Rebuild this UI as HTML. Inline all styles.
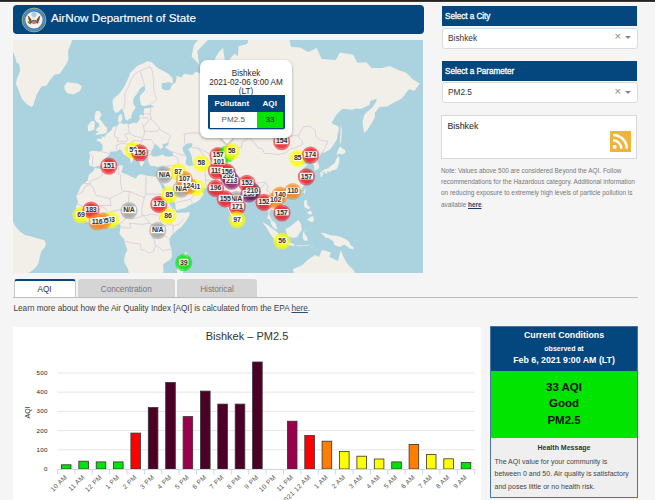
<!DOCTYPE html>
<html><head><meta charset="utf-8">
<style>
*{box-sizing:border-box;margin:0;padding:0}
html,body{width:655px;height:500px;overflow:hidden;background:#f5f5f5;font-family:"Liberation Sans",sans-serif;position:relative}
.abs{position:absolute}
#topbar{left:0;top:0;width:655px;height:1px;background:#232323}#topbar1{left:0;top:1px;width:655px;height:1px;background:#3c3c3c}
#topbar2{left:0;top:2px;width:655px;height:1px;background:#fafafa}
#hdr{left:13px;top:5px;width:411px;height:29px;background:#04477f;border-radius:4px}
#seal{left:20px;top:6px;width:28px;height:28px}
#title{left:51px;top:10px;font-size:11.65px;color:#fff;line-height:16px;white-space:nowrap;-webkit-text-stroke:0.15px #fff}
#map{left:13px;top:40px;width:410px;height:233px;background:#aad3df;overflow:hidden}
#map svg{position:absolute;left:0;top:0}
.ml{font:bold 7px "Liberation Sans",sans-serif;fill:#333;text-anchor:middle;letter-spacing:-0.2px}
#popup{left:199.5px;top:60px;width:92px;height:77.5px;background:#fff;border-radius:7px;box-shadow:0 1px 3px rgba(0,0,0,.35)}
#tip{left:221.5px;top:131.5px;width:10px;height:10px;background:#fff;transform:rotate(45deg);box-shadow:1px 1px 2px rgba(0,0,0,.25)}
#pt{left:199.5px;top:69.3px;width:93px;text-align:center;font-size:8.15px;line-height:9px;color:#2a2a2a}
#ptab{left:208px;top:95.3px;width:76.5px;height:34px;background:#04477f;border-radius:0 0 2px 2px;box-shadow:0 0.5px 0 #6a93bd}
#ptab .h{position:absolute;left:0;top:0;width:76px;height:16px;color:#fff;font-weight:bold;font-size:8.1px}
#ptab .c1{position:absolute;left:1.5px;top:17px;width:47.5px;height:15.5px;background:#fff;font-size:8.1px;color:#555;text-align:center;line-height:16px}
#ptab .c2{position:absolute;left:49px;top:17px;width:26px;height:15.5px;background:#00e400;font-size:8.1px;color:#222;text-align:center;line-height:16px}
.sel-h{left:442px;width:195px;height:20px;background:#04477f;color:#fff;font-size:8.2px;padding-left:3px;line-height:21px;-webkit-text-stroke:0.3px #fff;letter-spacing:-0.05px}
.sel-i{left:442px;width:195.5px;height:21px;background:#fff;border:1px solid #dcdcdc;border-radius:3px;font-size:8.3px;color:#333;padding-left:5px;line-height:18px}
.sel-i .x{position:absolute;left:171.5px;top:-1.3px;font-size:11px;color:#888}
.sel-i .ar{position:absolute;left:182px;top:7.8px;width:0;height:0;border-left:3px solid transparent;border-right:3px solid transparent;border-top:3px solid #888}
#cityb{left:441px;top:115px;width:196px;height:43.5px;background:#fff;border:1.5px solid #d8d8d8}
#cityb .n{position:absolute;left:5.5px;top:5px;font-size:8.8px;color:#333;-webkit-text-stroke:0.1px #333}
#rss{left:610px;top:131px;width:20.5px;height:20.5px;background:#f2b33d}
#note{left:441px;top:164.8px;width:196px;font-size:6.4px;line-height:11.3px;color:#777;white-space:nowrap}
#note b{color:#1a3a6e;text-decoration:underline}
.tab{top:279px;height:18px;font-size:8.2px;text-align:center;line-height:20px;border-radius:3px 3px 0 0}
#tab1{left:13.5px;width:62px;background:#fff;color:#333;border:1px solid #c8c8c8;border-top:2px solid #04477f;border-bottom:none;line-height:17px}
#tab2{left:78px;width:96.5px;background:#d5d5d5;color:#777;line-height:22px}
#tab3{left:177px;width:80px;background:#d5d5d5;color:#777;line-height:22px}
#tabline{left:13px;top:296.5px;width:624.5px;height:1px;background:#bcbcbc}
#learn{left:13.5px;top:303.3px;font-size:8.2px;color:#404040;white-space:nowrap;line-height:11px}
#learn u{color:#2a4a78}
#chart{left:13px;top:327px;width:468px;height:173px;background:#fff}
#chart svg{position:absolute;left:0;top:0}
.yl{font:6.2px "Liberation Sans",sans-serif;fill:#222;text-anchor:end;letter-spacing:0.3px}
.xl{font:6.6px "Liberation Sans",sans-serif;fill:#555;text-anchor:end;letter-spacing:0.35px}
.at{font:7px "Liberation Sans",sans-serif;fill:#333;text-anchor:middle}
.ct{font:11px "Liberation Sans",sans-serif;fill:#333;text-anchor:middle}
#cc{left:490px;top:326px;width:148px;height:172px;border:1px solid #4a74a2;background:#efefef}
#cc .hd{position:absolute;left:0;top:0;width:146px;height:43.5px;background:#04477f;color:#fff;text-align:center;font-weight:bold}
#cc .g{position:absolute;left:0;top:43.5px;width:146px;height:67.5px;background:#00e400;color:#111;text-align:center;font-size:11.5px;font-weight:bold;line-height:16.5px;padding-top:8px}
#cc .hm{position:absolute;left:0;top:111px;width:146px;text-align:center;font-weight:bold;font-size:7px;color:#333;padding-top:6px}
#cc .tx{position:absolute;left:3.5px;top:129.4px;width:143px;font-size:7px;line-height:12.1px;color:#444;white-space:nowrap}
</style></head><body>
<div class="abs" id="topbar"></div><div class="abs" id="topbar1"></div>
<div class="abs" id="topbar2"></div>
<div class="abs" id="hdr"></div>
<svg class="abs" id="seal" viewBox="0 0 28 28">
 <circle cx="14" cy="14" r="11.9" fill="#3f7cb8" stroke="#a9b56e" stroke-width="0.9"/>
 <circle cx="14" cy="14" r="10.2" fill="none" stroke="#6f9fce" stroke-width="0.6"/>
 <circle cx="14" cy="14" r="8.6" fill="#f4f2ea"/>
 <circle cx="14" cy="8.6" r="2.6" fill="#a9cfe0"/>
 <path d="M7.6 9.2 Q9.5 10.5 11.3 13.5 L12.2 16.5 L10.5 18 Q8.5 15 7.6 9.2Z" fill="#7b5227"/>
 <path d="M20.4 9.2 Q18.5 10.5 16.7 13.5 L15.8 16.5 L17.5 18 Q19.5 15 20.4 9.2Z" fill="#7b5227"/>
 <circle cx="14" cy="12.6" r="1.3" fill="#e9e4d6"/>
 <path d="M12 14.6 h4 v2.6 q-2 2.2 -4 0Z" fill="#d96f78"/>
 <rect x="12" y="14" width="4" height="1.2" fill="#4a6fb0"/>
 <path d="M7.8 15.5 q1.5 1.5 3 2.6" stroke="#4f8a3a" stroke-width="1.2" fill="none"/>
 <path d="M17 18 q1.8 -0.8 3 -2.5" stroke="#b9b09a" stroke-width="0.8" fill="none"/>
</svg>
<div class="abs" id="title">AirNow Department of State</div>

<div class="abs" id="map">
<svg width="410" height="233" viewBox="0 0 410 233"><defs><filter id="bl" x="-20%" y="-40%" width="140%" height="180%"><feGaussianBlur stdDeviation="0.45"/></filter></defs>
<path d="M82.5 127.2L76.6 125.4L75.7 121.8L77.1 116.8L76.1 112.6L78.6 110.8L86.5 111.5L88.8 111.5L89.5 108.7L89.5 104.9L87.4 102.3L84.4 101.0L83.5 99.3L86.5 98.5L89.0 99.0L88.3 96.3L91.3 97.0L92.3 95.7L94.2 93.1L95.6 92.6L97.3 91.6L99.1 89.1L100.1 86.7L103.1 86.1L105.4 85.0L105.8 83.3L104.9 80.4L105.8 75.6L109.1 73.8L108.6 77.1L109.6 77.7L108.1 81.8L108.4 83.6L111.2 84.1L113.7 83.6L115.4 84.7L118.9 83.3L121.8 82.4L123.0 83.6L124.8 82.1L126.5 79.8L126.3 76.5L127.3 74.4L129.6 75.0L131.3 75.9L130.5 71.9L131.3 68.4L135.4 68.0L137.9 67.7L141.2 66.4L137.3 64.7L132.1 66.1L128.6 65.7L127.1 61.3L126.8 56.0L132.1 50.3L131.6 45.2L127.1 48.4L123.8 54.1L120.8 57.8L120.2 61.3L120.5 64.4L122.8 67.1L121.3 69.7L119.2 72.8L118.0 78.3L115.9 78.9L114.5 80.7L112.4 79.2L111.7 75.9L111.1 73.8L109.9 70.0L108.9 68.7L107.4 70.0L104.8 72.5L102.6 72.8L100.8 70.3L100.1 66.7L99.6 64.4L99.6 60.3L101.4 57.8L105.6 54.5L108.9 50.3L111.4 46.4L114.0 40.7L116.0 36.8L117.2 32.7L121.3 29.0L124.3 25.7L129.6 23.7L134.3 21.2L138.8 22.2L142.6 26.1L145.4 28.6L149.5 30.4L155.3 33.7L159.5 38.1L160.0 43.6L156.2 42.3L148.7 43.2L148.9 48.4L152.0 50.3L157.0 49.9L158.6 45.2L162.8 42.3L163.6 35.9L168.6 37.2L171.1 33.7L179.4 35.0L182.7 31.8L188.5 33.7L191.8 28.6L203.4 32.7L202.6 28.6L201.8 19.1L205.9 12.1L210.0 8.0L211.7 19.1L210.5 41.1L215.0 35.9L216.7 19.1L221.7 13.7L225.0 16.4L225.5 6.3L234.1 3.9L237.4 -7.7L257.3 -22.5L273.9 -11.2L278.0 6.9L287.1 7.5L295.4 12.1L303.7 8.0L308.7 19.1L322.8 20.1L326.9 12.6L340.2 14.8L344.3 22.7L353.5 22.2L358.4 28.1L369.2 28.1L376.7 26.1L386.6 30.4L393.3 32.7L399.9 39.4L406.9 43.6L404.0 47.2L401.5 50.7L395.7 49.2L390.8 56.0L388.3 58.8L380.0 63.0L374.2 66.4L366.7 67.1L361.8 72.8L362.1 76.5L359.6 81.8L356.8 86.1L354.5 89.7L351.1 92.9L350.5 88.9L349.5 81.8L351.5 74.4L354.8 71.3L359.3 67.4L362.9 62.0L363.9 58.5L357.3 60.9L356.4 65.1L347.7 69.0L343.5 68.4L338.5 69.7L329.4 68.7L323.6 74.4L318.3 83.3L322.8 85.3L325.6 86.4L325.8 90.2L324.4 95.5L324.0 99.3L320.8 104.2L317.3 108.9L312.0 112.4L308.7 113.1L306.7 115.7L303.7 119.0L304.6 122.2L306.0 125.4L306.2 128.3L304.6 129.5L300.9 130.5L301.2 127.9L301.2 125.4L299.6 123.7L298.4 122.0L297.4 119.5L293.8 120.1L293.4 117.3L292.1 117.9L289.6 120.5L287.1 122.0L288.8 124.5L291.3 123.9L294.8 124.5L291.3 127.4L289.3 129.5L291.0 131.1L293.4 135.4L293.6 137.8L291.8 138.9L293.8 140.1L291.8 144.0L289.6 147.8L288.0 149.6L284.8 151.9L281.3 153.2L277.2 154.1L274.7 155.0L274.2 157.1L271.4 155.0L268.9 155.9L268.1 157.6L266.9 159.9L269.2 162.9L271.1 164.6L272.2 167.2L272.7 170.9L270.9 173.5L268.6 174.3L265.3 177.2L264.6 174.3L262.3 172.1L260.3 170.3L258.1 168.9L257.1 170.9L256.0 174.3L257.6 177.4L258.8 180.2L260.9 181.2L262.9 184.0L263.8 187.4L264.3 189.2L263.1 189.3L260.3 187.5L259.0 185.7L257.8 182.5L257.5 180.0L254.5 178.2L254.8 175.2L255.1 172.3L254.3 168.9L253.5 165.8L253.3 163.6L251.2 163.9L248.8 164.8L248.0 162.0L246.7 158.5L245.5 156.8L244.0 154.1L243.0 152.7L241.5 153.6L239.1 154.4L236.6 155.0L235.6 156.8L232.9 158.5L229.6 161.8L227.8 163.8L225.5 165.0L224.5 167.2L224.6 169.8L223.8 172.6L223.8 174.5L222.3 176.0L220.0 178.0L218.3 176.7L217.3 174.0L215.7 170.6L213.7 165.5L212.4 160.3L212.2 156.8L211.9 154.6L211.5 153.7L210.0 155.9L208.4 156.2L206.2 154.4L206.2 153.2L205.7 152.7L204.6 151.4L203.1 149.9L201.9 148.1L197.6 148.1L193.5 148.3L189.0 147.8L186.3 145.7L184.8 144.8L182.2 145.7L179.5 144.2L176.9 143.5L175.2 140.8L173.1 139.3L171.6 138.5L170.8 140.5L171.9 142.2L173.2 144.0L174.6 146.3L175.6 148.7L176.2 146.6L177.1 149.2L178.5 150.5L181.0 150.1L182.7 148.7L184.3 147.4L185.0 146.3L185.3 149.6L187.5 151.2L190.6 153.2L190.2 155.3L188.5 156.8L187.2 159.6L184.2 161.5L181.7 163.1L178.5 163.9L174.7 166.2L172.1 167.9L166.9 169.2L164.9 170.3L163.3 170.1L162.6 168.1L162.3 165.5L162.3 163.2L159.5 159.4L156.5 155.9L155.5 152.3L153.2 148.7L150.9 145.0L149.0 142.9L149.5 140.3L148.5 143.1L148.2 143.5L146.0 140.5L145.6 139.5L146.2 142.2L147.7 145.3L149.7 149.6L152.5 154.1L153.3 157.6L155.3 161.2L156.7 164.6L158.8 166.7L162.1 169.8L163.1 172.3L163.6 172.8L165.3 173.1L168.6 172.5L172.7 172.8L175.7 172.1L176.4 171.8L176.6 174.2L175.7 176.5L173.7 179.9L171.4 183.2L167.8 187.4L164.5 189.8L161.0 193.2L158.2 195.6L156.5 199.3L156.7 202.8L157.2 205.6L158.3 208.2L158.8 212.4L159.0 216.7L157.0 219.8L153.7 221.8L150.0 224.5L150.4 228.0L150.4 232.5L146.2 235.2L145.4 239.9L139.6 247.6L134.6 252.5L123.0 252.5L121.7 247.6L118.9 241.8L116.0 234.3L115.0 228.9L111.1 221.8L111.4 217.5L112.7 213.2L114.4 209.9L113.1 206.5L111.9 203.1L111.7 201.5L111.1 199.1L108.4 196.5L106.4 193.2L106.9 190.7L107.7 187.4L107.4 185.4L105.8 184.4L103.1 184.2L101.4 184.4L99.0 181.9L97.0 180.9L94.0 181.2L91.5 182.2L88.2 183.5L84.9 182.9L79.1 184.2L76.6 183.2L73.3 180.9L69.9 178.9L69.6 177.4L68.8 175.5L66.6 173.5L65.3 171.8L63.6 170.1L63.3 168.1L62.5 166.9L64.1 164.8L64.8 162.0L64.3 158.5L63.1 156.2L64.6 153.2L66.1 150.5L67.5 146.8L69.6 143.9L72.8 142.0L74.9 140.3L75.3 137.0L76.1 134.5L79.1 132.3L80.7 130.5L81.7 127.9Z" fill="#f2efe9"/>
<path d="M-8.0 -106.0L-8.0 -22.5L-3.0 -11.2L-2.2 -4.4L-1.0 3.3L-0.5 10.9L2.0 16.4L3.6 22.7L6.1 24.2L7.3 30.0L6.1 33.7L3.6 39.4L3.1 44.4L5.3 49.2L6.9 54.1L9.4 59.5L13.6 64.0L18.7 67.1L20.5 64.7L21.9 59.5L24.0 54.1L28.5 46.4L33.5 45.6L36.8 40.2L41.8 34.6L46.7 33.7L51.7 26.6L54.2 22.7L55.4 19.1L55.0 10.9L58.7 2.0L60.0 -7.7L66.6 -106.0Z" fill="#f2efe9"/>
<path d="M54.2 42.3L65.0 43.6L69.0 46.4L67.0 51.1L60.3 54.5L53.9 53.0L51.7 49.2L51.2 46.0Z" fill="#f2efe9"/>
<path d="M82.0 95.2L92.0 93.4L93.8 91.8L94.3 87.8L91.7 85.8L89.0 81.8L86.5 78.9L88.5 74.4L86.5 70.9L83.2 70.9L81.9 74.4L81.6 78.9L83.2 81.8L85.7 83.3L86.5 86.7L83.7 88.0L83.0 91.0L86.2 91.6L84.5 92.4Z" fill="#f2efe9"/>
<path d="M75.3 91.6L74.6 86.1L78.2 81.3L81.6 81.3L81.6 86.1L81.1 89.7Z" fill="#f2efe9"/>
<path d="M308.7 132.5L315.3 130.9L316.7 132.5L318.6 130.5L323.3 129.5L324.6 127.4L326.1 122.7L326.6 117.9L325.3 116.2L323.3 119.0L321.5 123.3L318.3 125.4L315.3 128.3L311.2 129.5L308.5 131.5Z" fill="#f2efe9"/>
<path d="M307.9 137.4L307.0 131.9L310.0 132.5L309.4 136.4Z" fill="#f2efe9"/>
<path d="M311.2 133.5L312.8 131.1L314.7 131.1L314.2 132.9Z" fill="#f2efe9"/>
<path d="M323.6 115.7L324.3 111.7L326.8 106.6L331.9 110.1L332.7 112.4L329.1 114.6L325.3 113.5L324.4 115.1Z" fill="#f2efe9"/>
<path d="M326.9 105.4L327.3 95.5L327.8 83.9L328.9 90.2L328.3 100.5Z" fill="#f2efe9"/>
<path d="M292.9 148.1L291.6 154.1L290.6 152.3L291.6 149.4Z" fill="#f2efe9"/>
<path d="M274.7 157.6L273.1 160.8L271.6 158.3L273.4 157.5Z" fill="#f2efe9"/>
<path d="M291.5 160.3L294.1 160.5L293.8 164.6L297.4 168.1L295.4 168.9L291.5 167.2L291.0 163.8Z" fill="#f2efe9"/>
<path d="M299.6 175.7L301.2 179.9L299.2 182.2L293.8 179.9L296.3 177.9Z" fill="#f2efe9"/>
<path d="M297.1 170.6L299.6 173.1L297.1 174.8L293.8 173.1Z" fill="#f2efe9"/>
<path d="M285.5 179.9L288.0 184.0L288.8 189.8L283.8 197.3L280.5 198.1L275.5 196.5L273.9 194.0L272.2 189.0L275.5 187.4L280.5 184.0L283.8 181.0Z" fill="#f2efe9"/>
<path d="M249.5 182.2L254.8 184.9L258.6 188.2L263.6 191.5L267.2 196.5L266.9 201.3L261.4 199.8L257.3 194.0L254.0 188.2Z" fill="#f2efe9"/>
<path d="M267.2 201.5L278.2 203.0L281.3 204.5L281.3 206.1L273.9 204.8L267.9 204.0L265.9 202.8Z" fill="#f2efe9"/>
<path d="M282.2 205.3L288.8 205.5L297.9 205.1L293.8 206.1L285.5 206.3Z" fill="#f2efe9"/>
<path d="M302.1 205.3L296.3 208.7L297.9 207.3Z" fill="#f2efe9"/>
<path d="M298.8 189.3L291.3 190.7L291.3 193.2L293.8 196.5L294.9 200.8L291.1 200.6L289.6 197.3L290.1 192.3L291.8 190.2L297.1 189.8Z" fill="#f2efe9"/>
<path d="M309.0 192.8L311.2 193.0L313.7 194.0L317.8 195.3L323.6 195.8L328.6 197.3L334.4 200.3L336.6 202.3L337.2 204.8L340.5 207.3L340.7 209.2L336.6 208.5L334.4 206.8L331.1 204.5L329.1 205.5L327.8 206.8L325.3 206.5L322.0 205.5L321.1 204.0L320.3 201.5L317.8 199.5L315.3 198.1L312.3 197.8L311.2 196.1L310.0 194.8L307.9 193.8Z" fill="#f2efe9"/>
<path d="M309.5 209.9L318.0 212.4L316.2 216.7L324.9 221.0L327.8 209.9L329.9 215.8L334.1 223.6L341.2 230.7L345.2 243.7L340.2 255.6L285.5 253.5L279.8 228.9L288.8 225.4L295.4 219.2L302.1 214.9L306.2 217.0L307.9 212.1Z" fill="#f2efe9"/>
<path d="M224.5 175.2L227.1 179.9L225.1 181.5L223.8 178.2Z" fill="#f2efe9"/>
<path d="M173.2 211.5L174.9 217.5L172.4 225.4L169.4 234.3L166.1 235.2L164.0 231.6L164.5 227.1L165.3 218.9L169.4 217.5L171.4 213.8Z" fill="#f2efe9"/>
<path d="M186.0 24.2L178.5 16.4L181.0 5.1L191.0 -7.7L204.2 -14.9L196.0 -1.1L184.3 10.9Z" fill="#f2efe9"/>
<path d="M423.1 16.4L418.1 26.6L412.3 33.7L416.5 44.4L409.8 46.4L413.2 50.3L416.5 56.0L414.8 66.4L426.4 71.3L418.1 81.8L436.4 69.7L444.7 63.0L456.3 66.4L456.3 16.4Z" fill="#f2efe9"/>
<path d="M145.1 128.3L147.9 129.3L146.2 130.3Z" fill="#f2efe9"/>
<path d="M130.5 128.3L135.1 128.9L132.1 129.5Z" fill="#f2efe9"/>
<path d="M112.1 122.7L117.4 122.9L116.5 126.0L112.2 124.1Z" fill="#f2efe9"/>
<path d="M106.8 116.4L107.4 121.0L105.4 121.4L105.1 117.3Z" fill="#f2efe9"/>
<path d="M107.1 112.4L106.8 116.0L105.8 114.6Z" fill="#f2efe9"/>
<path d="M0.0 182.5L3.0 187.0L7.5 192.0L12.0 195.0L16.5 196.0L23.0 198.0L29.0 199.5L31.5 200.5L33.0 203.5L32.0 207.0L28.5 211.0L27.0 216.0L25.5 223.0L23.0 227.0L19.5 230.5L15.0 233.0L0.0 233.0Z" fill="#f2efe9"/>
<path d="M82.5 127.2L84.2 126.0L87.9 126.0L90.3 124.1L91.8 121.8L91.0 120.1L93.0 117.5L95.1 116.0L96.8 113.7L97.3 111.7L100.1 111.5L103.9 111.2L106.3 109.2L108.4 110.1L110.1 113.7L113.9 116.4L115.5 117.7L117.4 119.0L117.4 123.3L119.7 121.2L120.5 117.9L122.2 118.6L118.0 115.1L113.9 111.2L112.1 108.2L114.0 106.1L115.5 108.2L118.9 111.2L123.3 114.6L123.8 119.0L126.3 122.2L127.3 125.4L129.0 126.4L130.3 123.7L131.3 122.7L129.5 120.1L129.3 117.9L132.1 117.3L135.4 117.1L134.9 118.4L135.4 122.2L137.1 125.6L142.1 126.2L144.6 127.0L148.7 125.8L151.5 126.2L151.0 129.5L149.7 133.5L148.4 136.6L144.6 136.8L139.6 136.4L132.9 135.4L128.0 133.9L124.7 135.4L123.0 138.4L118.0 136.4L113.1 133.9L110.6 133.5L108.1 131.5L109.7 128.5L109.7 125.2L108.1 125.4L99.8 125.8L93.2 127.4L88.2 129.1L81.7 127.9Z" fill="#aad3df"/>
<path d="M139.7 116.4L143.7 116.6L149.5 114.6L152.8 116.2L156.2 116.8L160.5 115.7L159.5 112.4L154.5 108.9L152.2 107.3L150.4 107.1L149.5 107.8L147.2 109.2L146.2 107.3L143.7 104.9L142.4 104.0L140.7 107.3L138.9 110.1L137.8 112.4L137.8 114.6Z" fill="#aad3df"/>
<path d="M152.2 107.1L155.0 104.9L156.2 102.8L149.5 104.2L150.0 107.1Z" fill="#aad3df"/>
<path d="M176.1 103.0L172.7 104.2L169.4 107.8L170.3 111.2L171.9 114.6L173.6 117.9L172.7 121.2L172.7 124.3L176.1 126.0L180.7 125.4L179.4 121.2L179.0 117.9L178.5 115.7L177.7 113.5L175.2 108.9L179.0 107.1L179.4 103.5Z" fill="#aad3df"/>
<path d="M171.9 104.2L171.1 94.2L177.7 92.9L182.7 92.9L192.6 94.2L192.6 86.1L199.3 83.3L207.6 81.8L212.5 84.7L218.3 87.5L223.3 92.9L229.1 93.4L236.2 97.5M236.2 97.5L239.1 95.5L244.0 94.2L254.0 94.7L254.8 90.2L260.6 94.7L267.2 95.5L273.9 96.8L280.5 95.5L285.0 96.0M236.2 97.5L241.5 103.0L244.9 107.8L249.0 108.9L251.5 113.5L257.3 113.5L265.6 114.6L273.9 112.4L277.2 108.9L282.2 107.8L289.6 104.2L289.6 101.8L285.0 96.0M285.0 96.0L290.5 86.7L297.1 86.1L302.1 90.2L302.9 96.8L307.9 100.5L314.7 101.0L312.3 107.8L308.2 113.5M236.2 97.5L229.1 102.5L228.3 107.3L224.1 107.8L224.5 112.4L224.5 114.6L218.3 117.9L213.7 120.1L215.8 125.4L220.5 128.5M220.5 128.5L222.5 134.5L225.8 138.4L234.9 143.1L239.1 143.5L244.0 143.1L252.3 142.2L255.0 146.8L253.5 150.5L255.3 151.4L259.0 155.0L260.9 153.2L267.2 152.7L270.6 154.8M220.5 128.5L214.2 133.5L215.0 134.5L213.4 139.3L208.4 143.1L209.2 149.6L205.1 150.9M215.8 125.4L210.0 126.4L209.2 131.5L206.7 136.4L200.9 140.3L192.6 140.3L193.6 148.1M192.6 140.3L192.6 136.4L191.8 131.5L193.0 128.5L198.4 124.8L204.2 125.4L210.0 124.3L215.8 125.4M193.0 128.5L189.3 124.3L186.0 122.7L181.0 124.8M198.4 124.8L195.1 120.1L191.0 115.7L188.5 112.4L184.3 107.8L179.0 107.8M184.3 107.8L200.9 115.7L205.9 117.9L207.6 114.6L214.2 112.4L224.5 112.8M212.5 119.0L207.6 120.1L205.9 117.9M165.3 120.1L164.9 124.8L167.8 128.5L167.8 133.5L170.6 136.4L171.6 139.3M152.0 126.0L157.8 125.8L161.6 125.2L164.9 124.8M161.6 125.2L159.5 130.5L155.8 132.7L156.7 134.9L152.8 136.4L149.5 140.7M156.2 135.4L165.6 141.0L168.6 140.3L171.9 142.2M162.5 163.9L164.5 162.0L177.6 159.4L179.5 162.9M183.0 153.0L183.9 150.5L177.6 159.4M160.5 115.7L163.6 116.8L165.3 120.1M157.8 111.2L164.5 113.5L171.9 115.7M154.5 104.2L155.0 101.8L157.8 95.5L150.4 91.6L147.0 89.4M147.0 89.4L142.9 91.6L131.3 91.0L130.5 86.1L133.8 83.3L135.6 79.8L138.3 78.9L144.6 85.3L147.0 89.4M131.3 91.0L131.3 94.2L128.8 99.3L135.4 99.8L137.9 99.3L141.2 104.2L140.7 107.1M115.0 84.7L115.7 88.9L116.4 92.9L118.9 94.7L123.0 96.8L128.8 97.3M128.8 83.3L130.5 86.1M105.6 82.4L108.1 82.4M103.1 86.1L103.1 88.9L101.4 92.9L101.9 96.8L105.1 98.0L104.1 101.5L108.1 101.0L113.1 101.8L114.7 98.8L111.7 94.7L116.4 92.9M119.7 100.5L118.9 104.2L113.9 104.2L108.9 103.0L103.1 105.4L103.9 110.1M88.5 111.7L96.6 113.5M77.4 114.6L80.2 116.8L79.4 120.1L79.7 122.9L79.2 125.0M119.7 100.5L129.5 101.0L125.5 105.4L123.0 107.8L119.7 105.6L118.9 104.2M128.8 110.8L137.9 110.8M128.8 113.5L129.5 116.2L135.1 115.3L137.9 114.6M125.0 119.0L125.5 116.2L129.5 116.2M110.6 69.7L112.2 61.3L111.7 54.1L115.5 46.4L118.9 38.1L122.2 33.7L125.5 31.4M131.6 45.2L128.0 33.7L126.3 31.4L137.1 26.6L139.6 31.4L140.4 40.2L141.2 52.2L143.7 59.5L137.4 64.7M137.9 68.0L137.1 74.4L138.3 78.9M126.3 78.0L135.4 77.7M131.8 73.5L137.1 74.4M88.2 129.5L89.5 135.4L84.9 138.4L77.1 141.2L77.1 143.7L69.9 143.7M77.1 144.4L71.6 147.0L69.9 151.6L63.3 155.3M77.1 144.4L80.7 148.7L82.9 155.3L96.8 158.5L111.2 151.4M105.8 125.4L105.1 133.5L108.1 135.4L107.3 138.9L108.1 145.9L108.6 149.6L111.2 151.4M111.2 151.4L116.4 151.4L131.3 157.6L132.9 154.1M132.9 136.4L132.9 154.1L152.8 154.1M131.3 157.6L129.6 165.1L128.5 169.8L129.3 174.8M116.4 151.4L114.7 168.9L115.5 170.6M114.7 168.9L106.4 169.8L98.1 171.5L97.5 172.0L96.0 181.0M82.5 165.5L90.7 167.2L93.2 169.8L94.8 171.5M82.5 165.5L71.6 165.5L71.3 167.0L64.3 163.8M96.8 158.5L98.1 165.5L82.5 165.5M115.5 169.8L116.4 174.8L118.0 179.0L123.0 178.2L128.0 176.5L129.3 174.8L137.1 183.2L128.8 184.4L116.4 183.2L118.0 187.9L110.2 187.9L106.1 184.0L111.1 180.7L114.4 174.8L115.5 169.8M137.1 184.0L142.9 185.7L140.7 191.5L139.6 195.6L140.4 199.0L142.6 205.6L140.4 211.5L136.3 213.2L131.3 209.9L128.0 209.9L127.6 204.0L119.7 203.1L111.9 201.5M129.3 174.8L132.9 175.7L137.9 174.0L144.6 175.3L147.9 171.5L152.0 166.3L153.7 168.1L157.8 166.3L161.1 170.6M171.1 178.2L166.1 184.0L161.1 185.7L157.0 184.5L151.2 185.7L147.9 183.2L146.2 178.2L149.5 171.5L152.0 167.4M160.0 184.5L160.3 194.3M147.9 193.2L156.5 199.1M147.9 184.5L147.9 189.8L141.2 193.2L147.9 193.2M158.6 209.0L149.5 210.7L146.2 207.3L142.6 205.6M83.2 174.0L91.3 173.1L94.8 173.1L97.5 172.0M71.6 170.6L77.4 173.1L78.2 174.8L78.2 178.2L79.1 183.2M91.3 173.1L92.3 181.5M72.4 170.4L63.8 170.9M71.6 170.6L68.3 170.4L66.6 173.1M257.5 157.1L253.5 161.2L255.1 164.6L256.0 170.6L255.0 174.8M260.9 153.2L263.9 156.8L266.4 162.0L269.7 167.2L267.2 172.3L264.8 174.0M257.5 157.1L260.6 161.2L266.4 166.3L262.3 167.7L261.9 172.3M259.0 180.7L260.6 181.2M239.1 146.8L239.1 150.5L238.6 154.1M244.9 148.7L244.5 155.0M252.3 143.1L248.7 146.8L246.5 150.5L245.0 154.1L244.5 155.5M225.8 138.4L224.5 142.2L235.7 145.9L237.7 144.0M299.6 122.7L304.4 122.0M308.2 113.5L301.2 116.8L297.4 119.5" fill="none" stroke="#d2bfd2" stroke-width="0.65" stroke-linejoin="round"/>
<circle cx="119.9" cy="110.3" r="8.6" fill="#ffff00" fill-opacity="0.6"/><circle cx="119.9" cy="110.3" r="6.6" fill="#ffff00" fill-opacity="0.6"/>
<circle cx="126.8" cy="112.9" r="8.6" fill="#e81c24" fill-opacity="0.6"/><circle cx="126.8" cy="112.9" r="6.6" fill="#e81c24" fill-opacity="0.6"/>
<circle cx="95.8" cy="126.1" r="8.6" fill="#e81c24" fill-opacity="0.6"/><circle cx="95.8" cy="126.1" r="6.6" fill="#e81c24" fill-opacity="0.6"/>
<circle cx="151.4" cy="134.8" r="8.6" fill="#a0a0a0" fill-opacity="0.6"/><circle cx="151.4" cy="134.8" r="6.6" fill="#a0a0a0" fill-opacity="0.6"/>
<circle cx="68.0" cy="175.0" r="8.6" fill="#ffff00" fill-opacity="0.6"/><circle cx="68.0" cy="175.0" r="6.6" fill="#ffff00" fill-opacity="0.6"/>
<circle cx="78.0" cy="170.0" r="8.6" fill="#e81c24" fill-opacity="0.6"/><circle cx="78.0" cy="170.0" r="6.6" fill="#e81c24" fill-opacity="0.6"/>
<circle cx="98.0" cy="180.0" r="8.6" fill="#ffff00" fill-opacity="0.6"/><circle cx="98.0" cy="180.0" r="6.6" fill="#ffff00" fill-opacity="0.6"/>
<circle cx="90.0" cy="181.0" r="8.6" fill="#f8861a" fill-opacity="0.6"/><circle cx="90.0" cy="181.0" r="6.6" fill="#f8861a" fill-opacity="0.6"/>
<circle cx="84.0" cy="182.0" r="8.6" fill="#f8861a" fill-opacity="0.6"/><circle cx="84.0" cy="182.0" r="6.6" fill="#f8861a" fill-opacity="0.6"/>
<circle cx="116.0" cy="170.6" r="8.6" fill="#a0a0a0" fill-opacity="0.6"/><circle cx="116.0" cy="170.6" r="6.6" fill="#a0a0a0" fill-opacity="0.6"/>
<circle cx="144.7" cy="190.6" r="8.6" fill="#a0a0a0" fill-opacity="0.6"/><circle cx="144.7" cy="190.6" r="6.6" fill="#a0a0a0" fill-opacity="0.6"/>
<circle cx="155.0" cy="176.0" r="8.6" fill="#ffff00" fill-opacity="0.6"/><circle cx="155.0" cy="176.0" r="6.6" fill="#ffff00" fill-opacity="0.6"/>
<circle cx="145.8" cy="164.4" r="8.6" fill="#e81c24" fill-opacity="0.6"/><circle cx="145.8" cy="164.4" r="6.6" fill="#e81c24" fill-opacity="0.6"/>
<circle cx="156.2" cy="154.8" r="8.6" fill="#ffff00" fill-opacity="0.6"/><circle cx="156.2" cy="154.8" r="6.6" fill="#ffff00" fill-opacity="0.6"/>
<circle cx="165.0" cy="131.9" r="8.6" fill="#ffff00" fill-opacity="0.6"/><circle cx="165.0" cy="131.9" r="6.6" fill="#ffff00" fill-opacity="0.6"/>
<circle cx="183.4" cy="147.6" r="8.6" fill="#ffff00" fill-opacity="0.6"/><circle cx="183.4" cy="147.6" r="6.6" fill="#ffff00" fill-opacity="0.6"/>
<circle cx="168.2" cy="149.2" r="8.6" fill="#a0a0a0" fill-opacity="0.6"/><circle cx="168.2" cy="149.2" r="6.6" fill="#a0a0a0" fill-opacity="0.6"/>
<circle cx="171.4" cy="139.6" r="8.6" fill="#f8861a" fill-opacity="0.6"/><circle cx="171.4" cy="139.6" r="6.6" fill="#f8861a" fill-opacity="0.6"/>
<circle cx="175.4" cy="146.0" r="8.6" fill="#f8861a" fill-opacity="0.6"/><circle cx="175.4" cy="146.0" r="6.6" fill="#f8861a" fill-opacity="0.6"/>
<circle cx="188.2" cy="123.6" r="8.6" fill="#ffff00" fill-opacity="0.6"/><circle cx="188.2" cy="123.6" r="6.6" fill="#ffff00" fill-opacity="0.6"/>
<circle cx="170.7" cy="222.7" r="8.6" fill="#00e400" fill-opacity="0.6"/><circle cx="170.7" cy="222.7" r="6.6" fill="#00e400" fill-opacity="0.6"/>
<circle cx="205.0" cy="115.6" r="8.6" fill="#e81c24" fill-opacity="0.6"/><circle cx="205.0" cy="115.6" r="6.6" fill="#e81c24" fill-opacity="0.6"/>
<circle cx="205.8" cy="122.0" r="8.6" fill="#f8861a" fill-opacity="0.6"/><circle cx="205.8" cy="122.0" r="6.6" fill="#f8861a" fill-opacity="0.6"/>
<circle cx="203.4" cy="130.8" r="8.6" fill="#e81c24" fill-opacity="0.6"/><circle cx="203.4" cy="130.8" r="6.6" fill="#e81c24" fill-opacity="0.6"/>
<circle cx="213.8" cy="114.0" r="8.6" fill="#00e400" fill-opacity="0.6"/><circle cx="213.8" cy="114.0" r="6.6" fill="#00e400" fill-opacity="0.6"/>
<circle cx="218.6" cy="111.6" r="8.6" fill="#ffff00" fill-opacity="0.6"/><circle cx="218.6" cy="111.6" r="6.6" fill="#ffff00" fill-opacity="0.6"/>
<circle cx="202.6" cy="148.4" r="8.6" fill="#e81c24" fill-opacity="0.6"/><circle cx="202.6" cy="148.4" r="6.6" fill="#e81c24" fill-opacity="0.6"/>
<circle cx="223.4" cy="159.6" r="8.6" fill="#a0a0a0" fill-opacity="0.6"/><circle cx="223.4" cy="159.6" r="6.6" fill="#a0a0a0" fill-opacity="0.6"/>
<circle cx="224.2" cy="166.8" r="8.6" fill="#e81c24" fill-opacity="0.6"/><circle cx="224.2" cy="166.8" r="6.6" fill="#e81c24" fill-opacity="0.6"/>
<circle cx="212.2" cy="158.8" r="8.6" fill="#e81c24" fill-opacity="0.6"/><circle cx="212.2" cy="158.8" r="6.6" fill="#e81c24" fill-opacity="0.6"/>
<circle cx="224.0" cy="179.7" r="8.6" fill="#ffff00" fill-opacity="0.6"/><circle cx="224.0" cy="179.7" r="6.6" fill="#ffff00" fill-opacity="0.6"/>
<circle cx="218.6" cy="141.2" r="8.6" fill="#8a1a66" fill-opacity="0.6"/><circle cx="218.6" cy="141.2" r="6.6" fill="#8a1a66" fill-opacity="0.6"/>
<circle cx="215.4" cy="136.4" r="8.6" fill="#8a1a66" fill-opacity="0.6"/><circle cx="215.4" cy="136.4" r="6.6" fill="#8a1a66" fill-opacity="0.6"/>
<circle cx="213.8" cy="132.0" r="8.6" fill="#e81c24" fill-opacity="0.6"/><circle cx="213.8" cy="132.0" r="6.6" fill="#e81c24" fill-opacity="0.6"/>
<circle cx="236.0" cy="154.0" r="8.6" fill="#8a1a66" fill-opacity="0.6"/><circle cx="236.0" cy="154.0" r="6.6" fill="#8a1a66" fill-opacity="0.6"/>
<circle cx="239.3" cy="151.5" r="8.6" fill="#5c1a48" fill-opacity="0.6"/><circle cx="239.3" cy="151.5" r="6.6" fill="#5c1a48" fill-opacity="0.6"/>
<circle cx="233.9" cy="143.4" r="8.6" fill="#e81c24" fill-opacity="0.6"/><circle cx="233.9" cy="143.4" r="6.6" fill="#e81c24" fill-opacity="0.6"/>
<circle cx="251.0" cy="162.3" r="8.6" fill="#e81c24" fill-opacity="0.6"/><circle cx="251.0" cy="162.3" r="6.6" fill="#e81c24" fill-opacity="0.6"/>
<circle cx="279.7" cy="151.5" r="8.6" fill="#f8861a" fill-opacity="0.6"/><circle cx="279.7" cy="151.5" r="6.6" fill="#f8861a" fill-opacity="0.6"/>
<circle cx="267.1" cy="155.0" r="8.6" fill="#f8861a" fill-opacity="0.6"/><circle cx="267.1" cy="155.0" r="6.6" fill="#f8861a" fill-opacity="0.6"/>
<circle cx="262.6" cy="160.5" r="8.6" fill="#f8861a" fill-opacity="0.6"/><circle cx="262.6" cy="160.5" r="6.6" fill="#f8861a" fill-opacity="0.6"/>
<circle cx="269.0" cy="173.0" r="8.6" fill="#e81c24" fill-opacity="0.6"/><circle cx="269.0" cy="173.0" r="6.6" fill="#e81c24" fill-opacity="0.6"/>
<circle cx="269.0" cy="201.0" r="8.6" fill="#ffff00" fill-opacity="0.6"/><circle cx="269.0" cy="201.0" r="6.6" fill="#ffff00" fill-opacity="0.6"/>
<circle cx="268.6" cy="101.6" r="8.6" fill="#e81c24" fill-opacity="0.6"/><circle cx="268.6" cy="101.6" r="6.6" fill="#e81c24" fill-opacity="0.6"/>
<circle cx="284.6" cy="118.4" r="8.6" fill="#ffff00" fill-opacity="0.6"/><circle cx="284.6" cy="118.4" r="6.6" fill="#ffff00" fill-opacity="0.6"/>
<circle cx="297.4" cy="115.2" r="8.6" fill="#e81c24" fill-opacity="0.6"/><circle cx="297.4" cy="115.2" r="6.6" fill="#e81c24" fill-opacity="0.6"/>
<circle cx="293.4" cy="136.8" r="8.6" fill="#e81c24" fill-opacity="0.6"/><circle cx="293.4" cy="136.8" r="6.6" fill="#e81c24" fill-opacity="0.6"/>
<rect x="115.1" y="106.3" width="9.6" height="6.6" rx="1.2" fill="#fff" fill-opacity="0.92" filter="url(#bl)"/><text x="119.9" y="112.1" class="ml">50</text>
<rect x="120.2" y="108.9" width="13.3" height="6.6" rx="1.2" fill="#fff" fill-opacity="0.92" filter="url(#bl)"/><text x="126.8" y="114.7" class="ml">156</text>
<rect x="89.2" y="122.1" width="13.3" height="6.6" rx="1.2" fill="#fff" fill-opacity="0.92" filter="url(#bl)"/><text x="95.8" y="127.9" class="ml">151</text>
<rect x="144.6" y="130.8" width="13.7" height="6.6" rx="1.2" fill="#fff" fill-opacity="0.92" filter="url(#bl)"/><text x="151.4" y="136.6" class="ml">N/A</text>
<rect x="63.2" y="171.0" width="9.6" height="6.6" rx="1.2" fill="#fff" fill-opacity="0.92" filter="url(#bl)"/><text x="68.0" y="176.8" class="ml">69</text>
<rect x="71.4" y="166.0" width="13.3" height="6.6" rx="1.2" fill="#fff" fill-opacity="0.92" filter="url(#bl)"/><text x="78.0" y="171.8" class="ml">183</text>
<rect x="93.2" y="176.0" width="9.6" height="6.6" rx="1.2" fill="#fff" fill-opacity="0.92" filter="url(#bl)"/><text x="98.0" y="181.8" class="ml">53</text>
<rect x="83.4" y="177.0" width="13.3" height="6.6" rx="1.2" fill="#fff" fill-opacity="0.92" filter="url(#bl)"/><text x="90.0" y="182.8" class="ml">105</text>
<rect x="77.4" y="178.0" width="13.3" height="6.6" rx="1.2" fill="#fff" fill-opacity="0.92" filter="url(#bl)"/><text x="84.0" y="183.8" class="ml">116</text>
<rect x="109.2" y="166.6" width="13.7" height="6.6" rx="1.2" fill="#fff" fill-opacity="0.92" filter="url(#bl)"/><text x="116.0" y="172.4" class="ml">N/A</text>
<rect x="137.9" y="186.6" width="13.7" height="6.6" rx="1.2" fill="#fff" fill-opacity="0.92" filter="url(#bl)"/><text x="144.7" y="192.4" class="ml">N/A</text>
<rect x="150.2" y="172.0" width="9.6" height="6.6" rx="1.2" fill="#fff" fill-opacity="0.92" filter="url(#bl)"/><text x="155.0" y="177.8" class="ml">86</text>
<rect x="139.2" y="160.4" width="13.3" height="6.6" rx="1.2" fill="#fff" fill-opacity="0.92" filter="url(#bl)"/><text x="145.8" y="166.2" class="ml">178</text>
<rect x="151.4" y="150.8" width="9.6" height="6.6" rx="1.2" fill="#fff" fill-opacity="0.92" filter="url(#bl)"/><text x="156.2" y="156.6" class="ml">85</text>
<rect x="160.2" y="127.9" width="9.6" height="6.6" rx="1.2" fill="#fff" fill-opacity="0.92" filter="url(#bl)"/><text x="165.0" y="133.7" class="ml">87</text>
<rect x="178.6" y="143.6" width="9.6" height="6.6" rx="1.2" fill="#fff" fill-opacity="0.92" filter="url(#bl)"/><text x="183.4" y="149.4" class="ml">61</text>
<rect x="161.4" y="145.2" width="13.7" height="6.6" rx="1.2" fill="#fff" fill-opacity="0.92" filter="url(#bl)"/><text x="168.2" y="151.0" class="ml">N/A</text>
<rect x="164.8" y="135.6" width="13.3" height="6.6" rx="1.2" fill="#fff" fill-opacity="0.92" filter="url(#bl)"/><text x="171.4" y="141.4" class="ml">107</text>
<rect x="168.8" y="142.0" width="13.3" height="6.6" rx="1.2" fill="#fff" fill-opacity="0.92" filter="url(#bl)"/><text x="175.4" y="147.8" class="ml">124</text>
<rect x="183.4" y="119.6" width="9.6" height="6.6" rx="1.2" fill="#fff" fill-opacity="0.92" filter="url(#bl)"/><text x="188.2" y="125.4" class="ml">58</text>
<rect x="165.9" y="218.7" width="9.6" height="6.6" rx="1.2" fill="#fff" fill-opacity="0.92" filter="url(#bl)"/><text x="170.7" y="224.5" class="ml">39</text>
<rect x="198.4" y="111.6" width="13.3" height="6.6" rx="1.2" fill="#fff" fill-opacity="0.92" filter="url(#bl)"/><text x="205.0" y="117.4" class="ml">157</text>
<rect x="199.2" y="118.0" width="13.3" height="6.6" rx="1.2" fill="#fff" fill-opacity="0.92" filter="url(#bl)"/><text x="205.8" y="123.8" class="ml">101</text>
<rect x="196.8" y="126.8" width="13.3" height="6.6" rx="1.2" fill="#fff" fill-opacity="0.92" filter="url(#bl)"/><text x="203.4" y="132.6" class="ml">119</text>
<rect x="213.8" y="107.6" width="9.6" height="6.6" rx="1.2" fill="#fff" fill-opacity="0.92" filter="url(#bl)"/><text x="218.6" y="113.4" class="ml">58</text>
<rect x="196.0" y="144.4" width="13.3" height="6.6" rx="1.2" fill="#fff" fill-opacity="0.92" filter="url(#bl)"/><text x="202.6" y="150.2" class="ml">196</text>
<rect x="216.6" y="155.6" width="13.7" height="6.6" rx="1.2" fill="#fff" fill-opacity="0.92" filter="url(#bl)"/><text x="223.4" y="161.4" class="ml">N/A</text>
<rect x="217.6" y="162.8" width="13.3" height="6.6" rx="1.2" fill="#fff" fill-opacity="0.92" filter="url(#bl)"/><text x="224.2" y="168.6" class="ml">171</text>
<rect x="205.6" y="154.8" width="13.3" height="6.6" rx="1.2" fill="#fff" fill-opacity="0.92" filter="url(#bl)"/><text x="212.2" y="160.6" class="ml">155</text>
<rect x="219.2" y="175.7" width="9.6" height="6.6" rx="1.2" fill="#fff" fill-opacity="0.92" filter="url(#bl)"/><text x="224.0" y="181.5" class="ml">97</text>
<rect x="212.0" y="137.2" width="13.3" height="6.6" rx="1.2" fill="#fff" fill-opacity="0.92" filter="url(#bl)"/><text x="218.6" y="143.0" class="ml">213</text>
<rect x="208.8" y="132.4" width="13.3" height="6.6" rx="1.2" fill="#fff" fill-opacity="0.92" filter="url(#bl)"/><text x="215.4" y="138.2" class="ml">252</text>
<rect x="207.2" y="128.0" width="13.3" height="6.6" rx="1.2" fill="#fff" fill-opacity="0.92" filter="url(#bl)"/><text x="213.8" y="133.8" class="ml">156</text>
<rect x="229.4" y="150.0" width="13.3" height="6.6" rx="1.2" fill="#fff" fill-opacity="0.92" filter="url(#bl)"/><text x="236.0" y="155.8" class="ml">230</text>
<rect x="232.7" y="147.5" width="13.3" height="6.6" rx="1.2" fill="#fff" fill-opacity="0.92" filter="url(#bl)"/><text x="239.3" y="153.3" class="ml">210</text>
<rect x="227.3" y="139.4" width="13.3" height="6.6" rx="1.2" fill="#fff" fill-opacity="0.92" filter="url(#bl)"/><text x="233.9" y="145.2" class="ml">152</text>
<rect x="244.4" y="158.3" width="13.3" height="6.6" rx="1.2" fill="#fff" fill-opacity="0.92" filter="url(#bl)"/><text x="251.0" y="164.1" class="ml">152</text>
<rect x="273.1" y="147.5" width="13.3" height="6.6" rx="1.2" fill="#fff" fill-opacity="0.92" filter="url(#bl)"/><text x="279.7" y="153.3" class="ml">110</text>
<rect x="260.5" y="151.0" width="13.3" height="6.6" rx="1.2" fill="#fff" fill-opacity="0.92" filter="url(#bl)"/><text x="267.1" y="156.8" class="ml">140</text>
<rect x="256.0" y="156.5" width="13.3" height="6.6" rx="1.2" fill="#fff" fill-opacity="0.92" filter="url(#bl)"/><text x="262.6" y="162.3" class="ml">102</text>
<rect x="262.4" y="169.0" width="13.3" height="6.6" rx="1.2" fill="#fff" fill-opacity="0.92" filter="url(#bl)"/><text x="269.0" y="174.8" class="ml">157</text>
<rect x="264.2" y="197.0" width="9.6" height="6.6" rx="1.2" fill="#fff" fill-opacity="0.92" filter="url(#bl)"/><text x="269.0" y="202.8" class="ml">56</text>
<rect x="262.0" y="97.6" width="13.3" height="6.6" rx="1.2" fill="#fff" fill-opacity="0.92" filter="url(#bl)"/><text x="268.6" y="103.4" class="ml">154</text>
<rect x="279.8" y="114.4" width="9.6" height="6.6" rx="1.2" fill="#fff" fill-opacity="0.92" filter="url(#bl)"/><text x="284.6" y="120.2" class="ml">85</text>
<rect x="290.8" y="111.2" width="13.3" height="6.6" rx="1.2" fill="#fff" fill-opacity="0.92" filter="url(#bl)"/><text x="297.4" y="117.0" class="ml">174</text>
<rect x="286.8" y="132.8" width="13.3" height="6.6" rx="1.2" fill="#fff" fill-opacity="0.92" filter="url(#bl)"/><text x="293.4" y="138.6" class="ml">157</text>
</svg>
</div>

<div class="abs" id="tip"></div>
<div class="abs" id="popup"></div>
<div class="abs" id="pt">Bishkek<br>2021-02-06 9:00 AM<br>(LT)</div>
<div class="abs" id="ptab"><div class="h"><span style="position:absolute;left:6.5px;top:3.5px">Pollutant</span><span style="position:absolute;left:54.5px;top:3.5px">AQI</span></div><div class="c1">PM2.5</div><div class="c2">33</div></div>

<div class="abs sel-h" style="top:5.8px">Select a City</div>
<div class="abs sel-i" style="top:27.5px">Bishkek<span class="x">×</span><span class="ar"></span></div>
<div class="abs sel-h" style="top:60.8px;height:20.6px">Select a Parameter</div>
<div class="abs sel-i" style="top:82.2px">PM2.5<span class="x">×</span><span class="ar"></span></div>
<div class="abs" id="cityb"><div class="n">Bishkek</div></div>
<svg class="abs" id="rss" viewBox="0 0 20.5 20.5">
 <circle cx="4.65" cy="16" r="1.95" fill="#fff"/>
 <path d="M3 9.3 A8.4 8.4 0 0 1 11.4 17.7" stroke="#fff" stroke-width="2.5" fill="none"/>
 <path d="M3 3.9 A13.8 13.8 0 0 1 16.8 17.7" stroke="#fff" stroke-width="2.5" fill="none"/>
</svg>
<div class="abs" id="note">Note: Values above 500 are considered Beyond the AQI. Follow<br>recommendations for the Hazardous category. Additional information<br>on reducing exposure to extremely high levels of particle pollution is<br>available <b>here</b>.</div>

<div class="abs tab" id="tab1">AQI</div>
<div class="abs tab" id="tab2">Concentration</div>
<div class="abs tab" id="tab3">Historical</div>
<div class="abs" id="tabline"></div>
<div class="abs" id="learn">Learn more about how the Air Quality Index [AQI] is calculated from the EPA <u>here</u>.</div>

<div class="abs" id="chart">
<svg width="468" height="173" viewBox="0 0 468 173">
<line x1="44.5" y1="122.8" x2="461.7" y2="122.8" stroke="#e6e6e6" stroke-width="1"/>
<line x1="44.5" y1="103.6" x2="461.7" y2="103.6" stroke="#e6e6e6" stroke-width="1"/>
<line x1="44.5" y1="84.4" x2="461.7" y2="84.4" stroke="#e6e6e6" stroke-width="1"/>
<line x1="44.5" y1="65.2" x2="461.7" y2="65.2" stroke="#e6e6e6" stroke-width="1"/>
<line x1="44.5" y1="46.0" x2="461.7" y2="46.0" stroke="#e6e6e6" stroke-width="1"/>
<text x="34.8" y="144.0" class="yl">0</text>
<text x="34.8" y="124.8" class="yl">100</text>
<text x="34.8" y="105.6" class="yl">200</text>
<text x="34.8" y="86.4" class="yl">300</text>
<text x="34.8" y="67.2" class="yl">400</text>
<text x="34.8" y="48.0" class="yl">500</text>
<rect x="48.4" y="137.8" width="9.6" height="4.2" fill="#00e400" stroke="#333" stroke-width="0.8"/>
<rect x="65.8" y="134.2" width="9.6" height="7.8" fill="#00e400" stroke="#333" stroke-width="0.8"/>
<rect x="83.2" y="134.9" width="9.6" height="7.1" fill="#00e400" stroke="#333" stroke-width="0.8"/>
<rect x="100.5" y="134.9" width="9.6" height="7.1" fill="#00e400" stroke="#333" stroke-width="0.8"/>
<rect x="117.9" y="106.1" width="9.6" height="35.9" fill="#ff0000" stroke="#333" stroke-width="0.8"/>
<rect x="135.3" y="80.5" width="9.6" height="61.5" fill="#4c0026" stroke="#333" stroke-width="0.8"/>
<rect x="152.7" y="55.5" width="9.6" height="86.5" fill="#4c0026" stroke="#333" stroke-width="0.8"/>
<rect x="170.1" y="89.6" width="9.6" height="52.4" fill="#99004c" stroke="#333" stroke-width="0.8"/>
<rect x="187.5" y="64.1" width="9.6" height="77.9" fill="#4c0026" stroke="#333" stroke-width="0.8"/>
<rect x="204.8" y="77.1" width="9.6" height="64.9" fill="#4c0026" stroke="#333" stroke-width="0.8"/>
<rect x="222.2" y="77.1" width="9.6" height="64.9" fill="#4c0026" stroke="#333" stroke-width="0.8"/>
<rect x="239.6" y="35.0" width="9.6" height="107.0" fill="#4c0026" stroke="#333" stroke-width="0.8"/>
<rect x="274.4" y="94.2" width="9.6" height="47.8" fill="#99004c" stroke="#333" stroke-width="0.8"/>
<rect x="291.8" y="108.5" width="9.6" height="33.5" fill="#ff0000" stroke="#333" stroke-width="0.8"/>
<rect x="309.1" y="114.2" width="9.6" height="27.8" fill="#ff7e00" stroke="#333" stroke-width="0.8"/>
<rect x="326.5" y="124.5" width="9.6" height="17.5" fill="#ffff00" stroke="#333" stroke-width="0.8"/>
<rect x="343.9" y="129.2" width="9.6" height="12.8" fill="#ffff00" stroke="#333" stroke-width="0.8"/>
<rect x="361.3" y="132.0" width="9.6" height="10.0" fill="#ffff00" stroke="#333" stroke-width="0.8"/>
<rect x="378.7" y="134.9" width="9.6" height="7.1" fill="#00e400" stroke="#333" stroke-width="0.8"/>
<rect x="396.1" y="117.4" width="9.6" height="24.6" fill="#ff7e00" stroke="#333" stroke-width="0.8"/>
<rect x="413.4" y="127.6" width="9.6" height="14.4" fill="#ffff00" stroke="#333" stroke-width="0.8"/>
<rect x="430.8" y="131.8" width="9.6" height="10.2" fill="#ffff00" stroke="#333" stroke-width="0.8"/>
<rect x="448.2" y="135.4" width="9.6" height="6.6" fill="#00e400" stroke="#333" stroke-width="0.8"/>
<line x1="44.5" y1="142.5" x2="461.7" y2="142.5" stroke="#ccd6eb" stroke-width="1"/>
<line x1="44.5" y1="142.5" x2="44.5" y2="147.5" stroke="#ccd6eb" stroke-width="1"/>
<line x1="61.9" y1="142.5" x2="61.9" y2="147.5" stroke="#ccd6eb" stroke-width="1"/>
<line x1="79.3" y1="142.5" x2="79.3" y2="147.5" stroke="#ccd6eb" stroke-width="1"/>
<line x1="96.7" y1="142.5" x2="96.7" y2="147.5" stroke="#ccd6eb" stroke-width="1"/>
<line x1="114.0" y1="142.5" x2="114.0" y2="147.5" stroke="#ccd6eb" stroke-width="1"/>
<line x1="131.4" y1="142.5" x2="131.4" y2="147.5" stroke="#ccd6eb" stroke-width="1"/>
<line x1="148.8" y1="142.5" x2="148.8" y2="147.5" stroke="#ccd6eb" stroke-width="1"/>
<line x1="166.2" y1="142.5" x2="166.2" y2="147.5" stroke="#ccd6eb" stroke-width="1"/>
<line x1="183.6" y1="142.5" x2="183.6" y2="147.5" stroke="#ccd6eb" stroke-width="1"/>
<line x1="200.9" y1="142.5" x2="200.9" y2="147.5" stroke="#ccd6eb" stroke-width="1"/>
<line x1="218.3" y1="142.5" x2="218.3" y2="147.5" stroke="#ccd6eb" stroke-width="1"/>
<line x1="235.7" y1="142.5" x2="235.7" y2="147.5" stroke="#ccd6eb" stroke-width="1"/>
<line x1="253.1" y1="142.5" x2="253.1" y2="147.5" stroke="#ccd6eb" stroke-width="1"/>
<line x1="270.5" y1="142.5" x2="270.5" y2="147.5" stroke="#ccd6eb" stroke-width="1"/>
<line x1="287.9" y1="142.5" x2="287.9" y2="147.5" stroke="#ccd6eb" stroke-width="1"/>
<line x1="305.2" y1="142.5" x2="305.2" y2="147.5" stroke="#ccd6eb" stroke-width="1"/>
<line x1="322.6" y1="142.5" x2="322.6" y2="147.5" stroke="#ccd6eb" stroke-width="1"/>
<line x1="340.0" y1="142.5" x2="340.0" y2="147.5" stroke="#ccd6eb" stroke-width="1"/>
<line x1="357.4" y1="142.5" x2="357.4" y2="147.5" stroke="#ccd6eb" stroke-width="1"/>
<line x1="374.8" y1="142.5" x2="374.8" y2="147.5" stroke="#ccd6eb" stroke-width="1"/>
<line x1="392.2" y1="142.5" x2="392.2" y2="147.5" stroke="#ccd6eb" stroke-width="1"/>
<line x1="409.6" y1="142.5" x2="409.6" y2="147.5" stroke="#ccd6eb" stroke-width="1"/>
<line x1="426.9" y1="142.5" x2="426.9" y2="147.5" stroke="#ccd6eb" stroke-width="1"/>
<line x1="444.3" y1="142.5" x2="444.3" y2="147.5" stroke="#ccd6eb" stroke-width="1"/>
<line x1="461.7" y1="142.5" x2="461.7" y2="147.5" stroke="#ccd6eb" stroke-width="1"/>
<text transform="translate(54.7,150.5) rotate(-45)" class="xl">10 AM</text>
<text transform="translate(72.1,150.5) rotate(-45)" class="xl">11 AM</text>
<text transform="translate(89.5,150.5) rotate(-45)" class="xl">12 PM</text>
<text transform="translate(106.8,150.5) rotate(-45)" class="xl">1 PM</text>
<text transform="translate(124.2,150.5) rotate(-45)" class="xl">2 PM</text>
<text transform="translate(141.6,150.5) rotate(-45)" class="xl">3 PM</text>
<text transform="translate(159.0,150.5) rotate(-45)" class="xl">4 PM</text>
<text transform="translate(176.4,150.5) rotate(-45)" class="xl">5 PM</text>
<text transform="translate(193.8,150.5) rotate(-45)" class="xl">6 PM</text>
<text transform="translate(211.1,150.5) rotate(-45)" class="xl">7 PM</text>
<text transform="translate(228.5,150.5) rotate(-45)" class="xl">8 PM</text>
<text transform="translate(245.9,150.5) rotate(-45)" class="xl">9 PM</text>
<text transform="translate(263.3,150.5) rotate(-45)" class="xl">10 PM</text>
<text transform="translate(280.7,150.5) rotate(-45)" class="xl">11 PM</text>
<text transform="translate(298.1,150.5) rotate(-45)" class="xl">2/06/2021 12 AM</text>
<text transform="translate(315.4,150.5) rotate(-45)" class="xl">1 AM</text>
<text transform="translate(332.8,150.5) rotate(-45)" class="xl">2 AM</text>
<text transform="translate(350.2,150.5) rotate(-45)" class="xl">3 AM</text>
<text transform="translate(367.6,150.5) rotate(-45)" class="xl">4 AM</text>
<text transform="translate(385.0,150.5) rotate(-45)" class="xl">5 AM</text>
<text transform="translate(402.4,150.5) rotate(-45)" class="xl">6 AM</text>
<text transform="translate(419.7,150.5) rotate(-45)" class="xl">7 AM</text>
<text transform="translate(437.1,150.5) rotate(-45)" class="xl">8 AM</text>
<text transform="translate(454.5,150.5) rotate(-45)" class="xl">9 AM</text>
<text transform="translate(17,85.5) rotate(-90)" class="at">AQI</text>
<text x="234" y="13" class="ct">Bishkek – PM2.5</text>
</svg>
</div>

<div class="abs" id="cc">
 <div class="hd"><div style="position:absolute;left:0;width:146px;top:4.45px;font-size:8.8px;line-height:8.8px">Current Conditions</div><div style="position:absolute;left:0;width:146px;top:17.9px;font-size:7px;line-height:7px">observed at</div><div style="position:absolute;left:0;width:146px;top:29.25px;font-size:8.8px;line-height:8.8px">Feb 6, 2021 9:00 AM (LT)</div></div>
 <div class="g">33 AQI<br>Good<br>PM2.5</div>
 <div class="hm">Health Message</div>
 <div class="tx">The AQI value for your community is<br>between 0 and 50. Air quality is satisfactory<br>and poses little or no health risk.</div>
</div>
</body></html>
